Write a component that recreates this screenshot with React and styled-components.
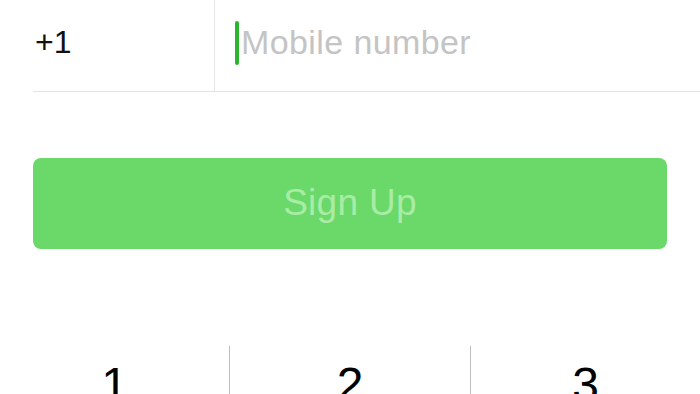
import styled, { createGlobalStyle } from "styled-components";

const GlobalStyle = createGlobalStyle`
  html, body {
    margin: 0;
    padding: 0;
    background: #ffffff;
    overflow: hidden;
  }
  body {
    font-family: "Liberation Sans", Arial, sans-serif;
    -webkit-font-smoothing: antialiased;
  }
`;

const keys = ["1", "2", "3"];

const App = () => {
  return (
    <Screen>
      <GlobalStyle />
      <PhoneRow>
        <CountryCode>+1</CountryCode>
        <NumberField>
          <Caret />
          <Placeholder>Mobile number</Placeholder>
        </NumberField>
      </PhoneRow>

      <SignUpButton disabled>Sign Up</SignUpButton>

      <Keypad>
        {keys.map((key, i) => (
          <Key key={key} $first={i === 0}>
            {key}
          </Key>
        ))}
      </Keypad>
    </Screen>
  );
};

const Screen = styled.div`
  width: 700px;
  height: 394px;
  overflow: hidden;
  display: flex;
  flex-direction: column;

  & > * {
    flex-shrink: 0;
  }
`;

const PhoneRow = styled.div`
  margin-left: 33px;
  height: 91px;
  display: flex;
  border-bottom: 1px solid #e2e2e2;
`;

const CountryCode = styled.div`
  width: 182px;
  border-right: 1px solid #e6e6e6;
  display: flex;
  align-items: center;
  padding-left: 2px;
  padding-bottom: 6px;
  box-sizing: border-box;
  font-size: 32px;
  color: #111111;
`;

const NumberField = styled.div`
  flex: 1;
  display: flex;
  align-items: center;
  padding-left: 20px;
  padding-bottom: 6px;
`;

const Caret = styled.span`
  width: 4px;
  height: 44px;
  border-radius: 2px;
  background: #2bb52f;
  margin-right: 2px;
`;

const Placeholder = styled.span`
  font-size: 34px;
  color: #c4c4c4;
  letter-spacing: 0.4px;
`;

const SignUpButton = styled.button`
  margin: 66px 33px 0;
  height: 91px;
  border: none;
  border-radius: 8px;
  background: #6bd86a;
  color: #a9eca6;
  font-family: "Liberation Sans", Arial, sans-serif;
  font-size: 37px;
  letter-spacing: 0.3px;
  padding: 0 0 2px;
  cursor: default;
`;

const Keypad = styled.div`
  margin-top: 97px;
  display: grid;
  grid-template-columns: 229px 241px 1fr;
  height: 100px;
`;

const Key = styled.div`
  border-left: ${(p) => (p.$first ? "none" : "1px solid #bdbdbd")};
  text-align: center;
  padding-top: 15px;
  font-size: 48px;
  color: #000000;
  line-height: 1;
`;

export default App;
